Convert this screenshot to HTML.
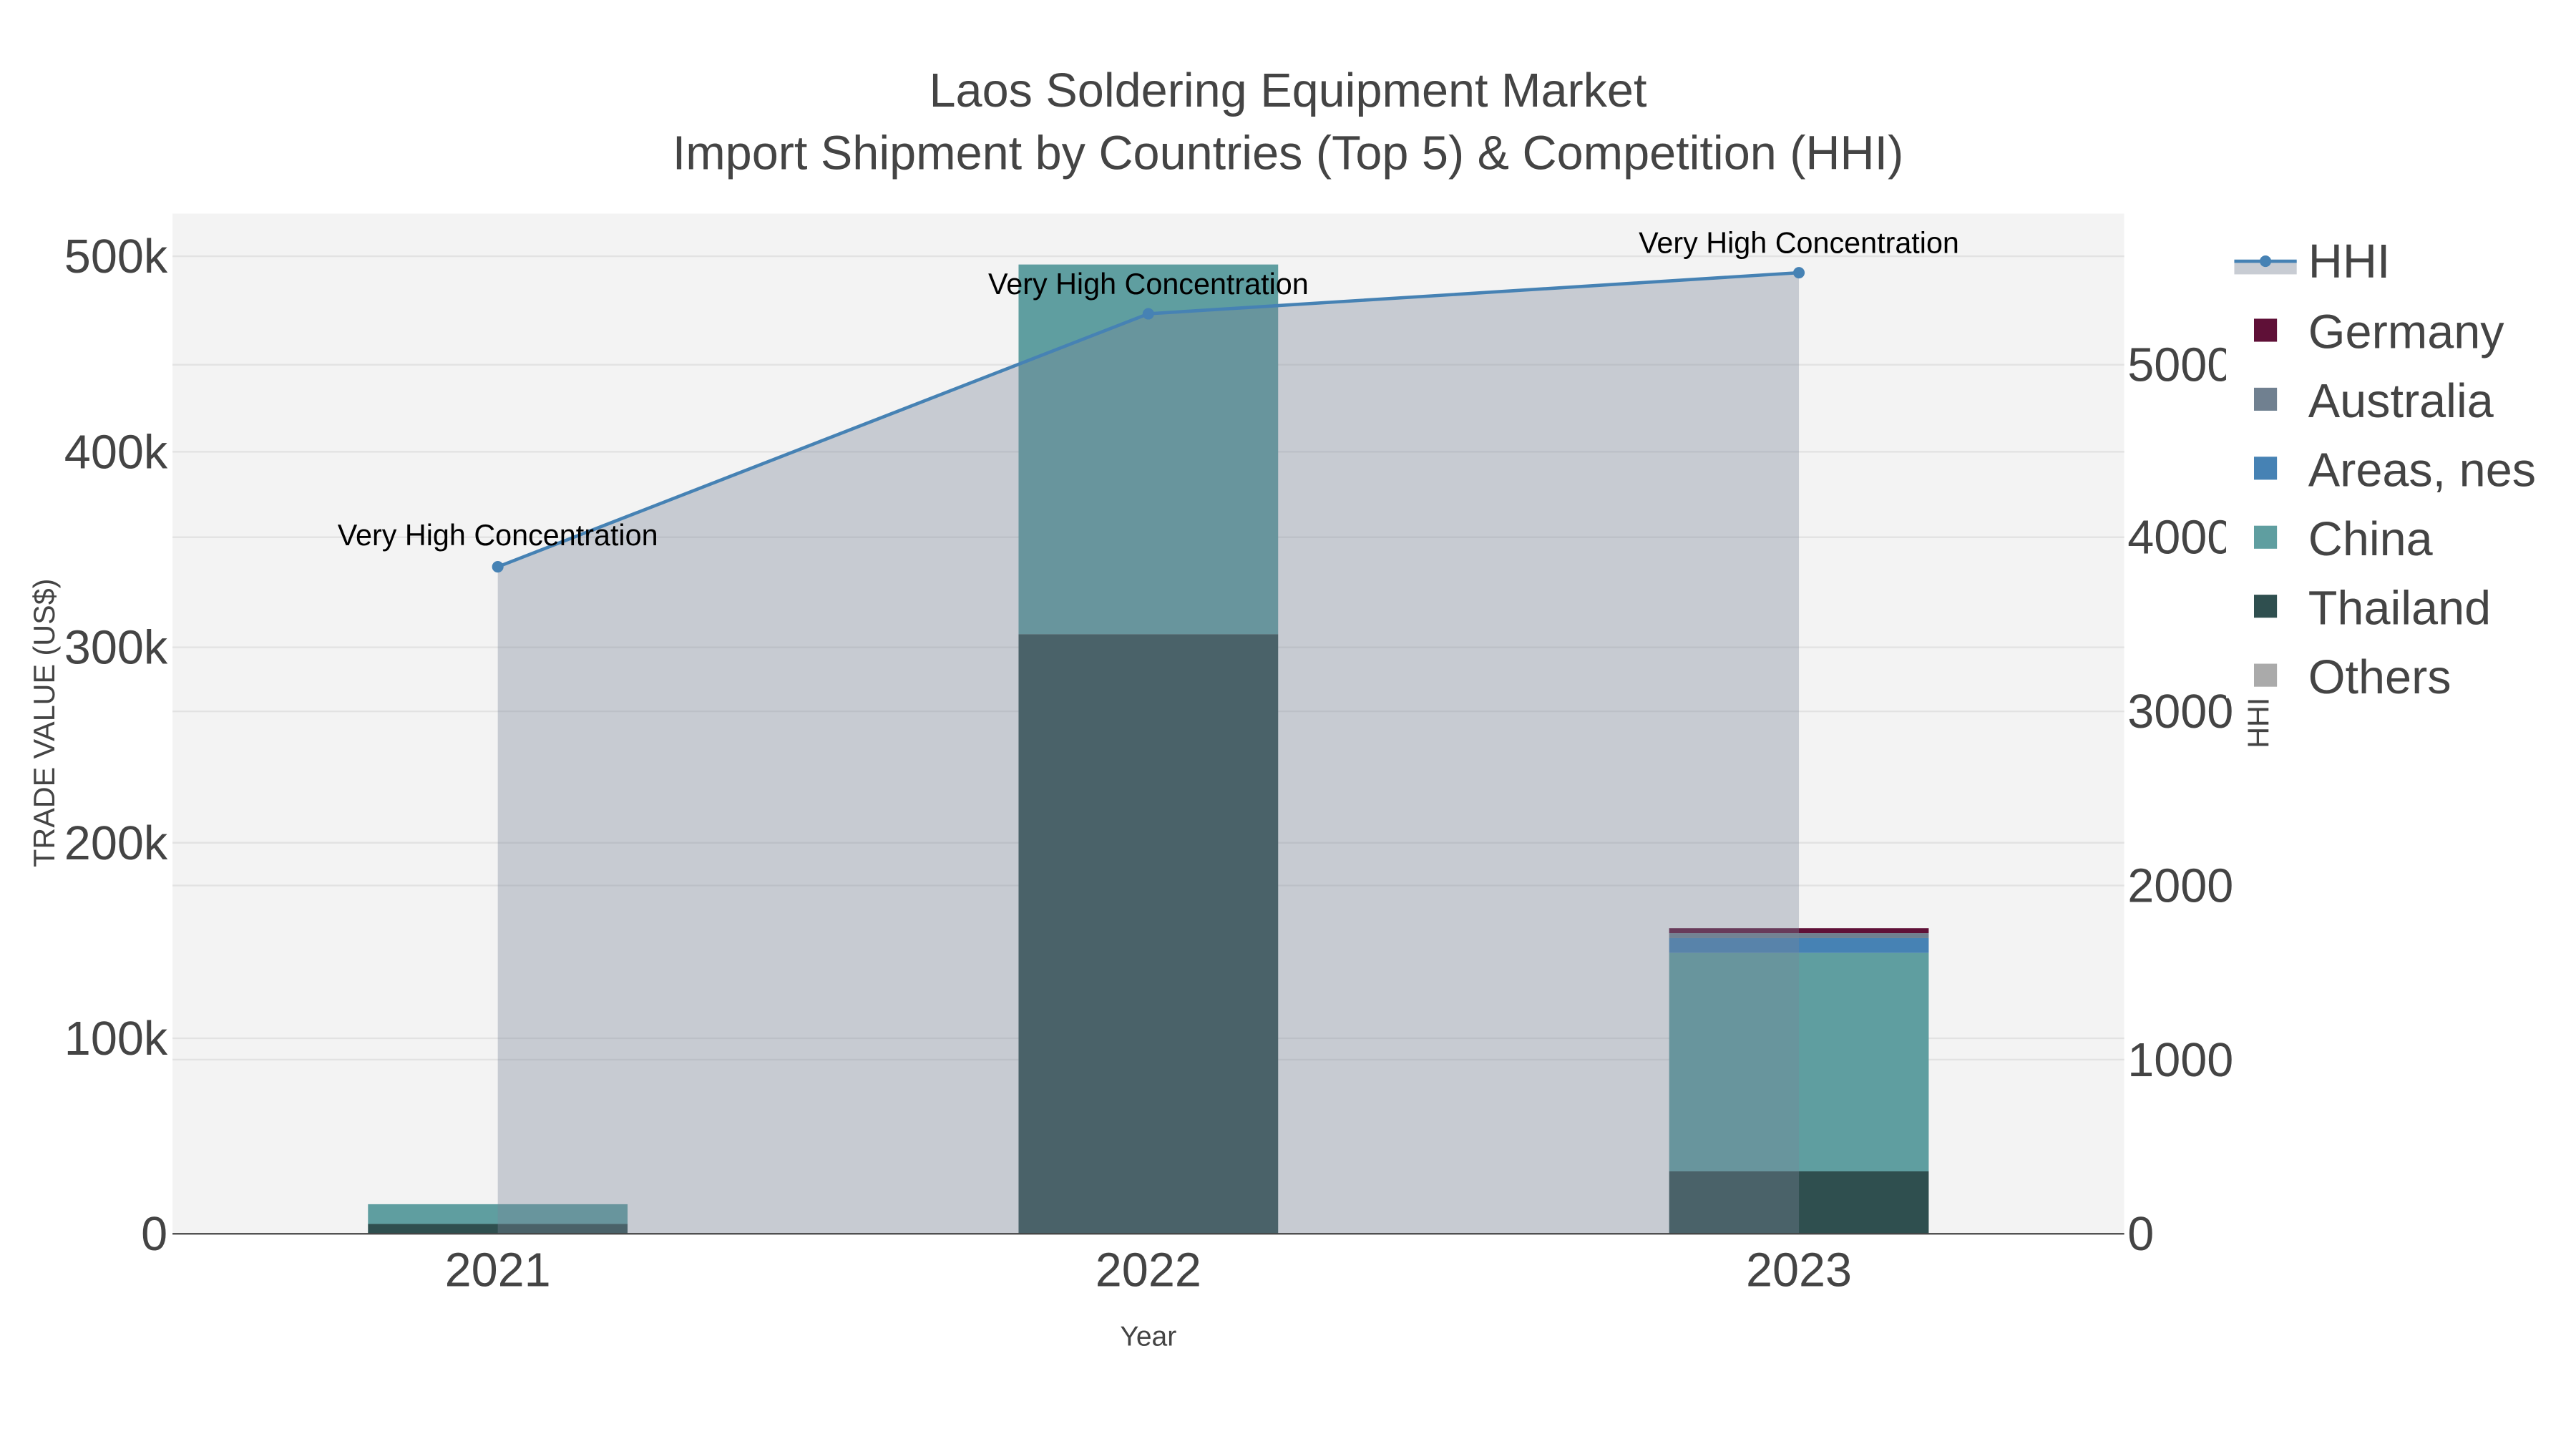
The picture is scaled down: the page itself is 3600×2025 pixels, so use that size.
<!DOCTYPE html>
<html><head><meta charset="utf-8"><style>html,body{margin:0;padding:0;background:#fff}svg{display:block}text{font-family:"Liberation Sans",sans-serif}</style></head>
<body>
<svg width="3600" height="2025" viewBox="0 0 1568 882" xmlns="http://www.w3.org/2000/svg">
<rect width="1568" height="882" fill="#fff"/>
<rect x="105" y="130" width="1188" height="621" fill="#f3f3f3"/>
<g stroke="#e2e2e2" stroke-width="1">
<line x1="105" x2="1293" y1="156" y2="156"/><line x1="105" x2="1293" y1="275" y2="275"/><line x1="105" x2="1293" y1="394" y2="394"/><line x1="105" x2="1293" y1="513" y2="513"/><line x1="105" x2="1293" y1="632" y2="632"/>
<line x1="105" x2="1293" y1="645" y2="645"/><line x1="105" x2="1293" y1="539" y2="539"/><line x1="105" x2="1293" y1="433" y2="433"/><line x1="105" x2="1293" y1="327" y2="327"/><line x1="105" x2="1293" y1="222" y2="222"/>
</g>
<rect x="224" y="745" width="158" height="6" fill="#2f4f4f"/>
<rect x="224" y="733" width="158" height="12" fill="#5f9ea0"/>
<rect x="620" y="386" width="158" height="365" fill="#2f4f4f"/>
<rect x="620" y="161" width="158" height="225" fill="#5f9ea0"/>
<rect x="1016" y="713" width="158" height="38" fill="#2f4f4f"/>
<rect x="1016" y="580" width="158" height="133" fill="#5f9ea0"/>
<rect x="1016" y="571" width="158" height="9" fill="#4682b4"/>
<rect x="1016" y="568" width="158" height="3" fill="#708090"/>
<rect x="1016" y="565" width="158" height="3" fill="#5f1037"/>
<polygon points="303,345 699,191 1095,166 1095,751 303,751" fill="rgba(123,134,153,0.36)"/>
<polyline points="303,345 699,191 1095,166" fill="none" stroke="#4682b4" stroke-width="2"/>
<circle cx="303" cy="345" r="3.5" fill="#4682b4"/><circle cx="699" cy="191" r="3.5" fill="#4682b4"/><circle cx="1095" cy="166" r="3.5" fill="#4682b4"/>
<line x1="105" x2="1293" y1="751" y2="751" stroke="#444" stroke-width="1"/>
<g font-size="18" fill="#000" text-anchor="middle">
<text x="303" y="332">Very High Concentration</text><text x="699" y="179">Very High Concentration</text><text x="1095" y="154">Very High Concentration</text>
</g>
<g font-size="29" fill="#444" text-anchor="end">
<text x="102" y="166">500k</text><text x="102" y="285">400k</text><text x="102" y="404">300k</text><text x="102" y="523">200k</text><text x="102" y="642">100k</text><text x="102" y="761">0</text>
</g>
<g font-size="29" fill="#444">
<text x="1295" y="232">5000</text><text x="1295" y="337">4000</text><text x="1295" y="443">3000</text><text x="1295" y="549">2000</text><text x="1295" y="655">1000</text><text x="1295" y="761">0</text>
</g>
<g font-size="29" fill="#444" text-anchor="middle">
<text x="303" y="783">2021</text><text x="699" y="783">2022</text><text x="1095" y="783">2023</text>
</g>
<text x="699" y="819" font-size="17" fill="#444" text-anchor="middle">Year</text>
<text transform="translate(33,440) rotate(-90)" font-size="18" fill="#444" text-anchor="middle">TRADE VALUE (US$)</text>
<g font-size="29" fill="#444" text-anchor="middle">
<text x="784" y="65">Laos Soldering Equipment Market</text>
<text x="784" y="103">Import Shipment by Countries (Top 5) &amp; Competition (HHI)</text>
</g>
<rect x="1355" y="140" width="213" height="285" fill="#fff"/>
<text transform="translate(1381,440) rotate(-90)" font-size="18" fill="#444" text-anchor="middle">HHI</text>
<rect x="1360" y="159" width="38" height="8" fill="#c8ccd3"/>
<line x1="1360" x2="1398" y1="159" y2="159" stroke="#4682b4" stroke-width="2"/><circle cx="1379" cy="159" r="3.5" fill="#4682b4"/>
<rect x="1372" y="194" width="14" height="14" fill="#5f1037"/>
<rect x="1372" y="236" width="14" height="14" fill="#708090"/>
<rect x="1372" y="278" width="14" height="14" fill="#4682b4"/>
<rect x="1372" y="320" width="14" height="14" fill="#5f9ea0"/>
<rect x="1372" y="362" width="14" height="14" fill="#2f4f4f"/>
<rect x="1372" y="404" width="14" height="14" fill="#aaaaaa"/>
<g font-size="29" fill="#444">
<text x="1405" y="169">HHI</text><text x="1405" y="212">Germany</text><text x="1405" y="254">Australia</text><text x="1405" y="296">Areas, nes</text><text x="1405" y="338">China</text><text x="1405" y="380">Thailand</text><text x="1405" y="422">Others</text>
</g>
</svg>
</body></html>
